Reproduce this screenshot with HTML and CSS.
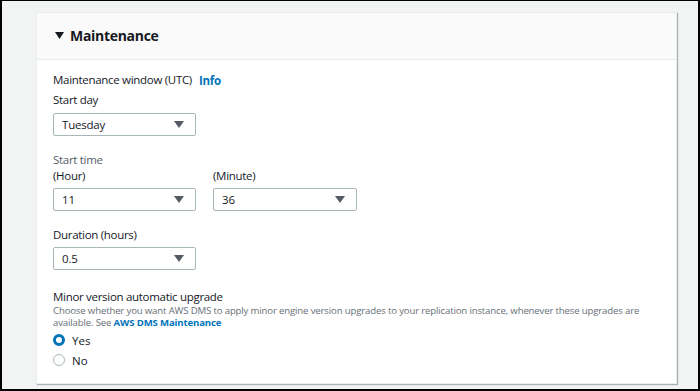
FILE: index.html
```html
<!DOCTYPE html>
<html>
<head>
<meta charset="utf-8">
<link rel="stylesheet" href="styles.css">
</head>
<body>
<div class="frame">
  <section class="card">
    <header class="card-head">
      <svg class="caret" width="9" height="7" viewBox="0 0 9 7"><path d="M0 0H9L4.5 7Z" fill="#16191f"/></svg>
      <h2>Maintenance</h2>
    </header>
    <div class="card-body">
      <div class="label-row"><span class="label">Maintenance window (UTC)</span><a class="info">Info</a></div>
      <div class="label sub">Start day</div>
      <div class="select w143"><span>Tuesday</span><svg class="arrow" width="10" height="7" viewBox="0 0 10 7"><path d="M0 0H10L5 7Z" fill="#545b64"/></svg></div>

      <div class="label muted gap-top">Start time</div>
      <div class="time-row">
        <div class="field">
          <div class="label">(Hour)</div>
          <div class="select w143 mt4"><span>11</span><svg class="arrow" width="10" height="7" viewBox="0 0 10 7"><path d="M0 0H10L5 7Z" fill="#545b64"/></svg></div>
        </div>
        <div class="field">
          <div class="label">(Minute)</div>
          <div class="select w144 mt4"><span>36</span><svg class="arrow" width="10" height="7" viewBox="0 0 10 7"><path d="M0 0H10L5 7Z" fill="#545b64"/></svg></div>
        </div>
      </div>

      <div class="label gap-top2">Duration (hours)</div>
      <div class="select w143 mt4"><span>0.5</span><svg class="arrow" width="10" height="7" viewBox="0 0 10 7"><path d="M0 0H10L5 7Z" fill="#545b64"/></svg></div>

      <div class="label strong gap-top3">Minor version automatic upgrade</div>
      <p class="desc">Choose whether you want AWS DMS to apply minor engine version upgrades to your replication instance, whenever these upgrades are available. See <a class="link">AWS DMS Maintenance</a></p>
      <div class="radio-row first"><span class="radio on"></span><span class="rlabel">Yes</span></div>
      <div class="radio-row"><span class="radio"></span><span class="rlabel">No</span></div>
    </div>
  </section>
</div>
</body>
</html>
```
FILE: styles.css
```css
* { box-sizing: border-box; }
html, body { margin: 0; padding: 0; }
body {
  width: 700px;
  height: 391px;
  background: #000;
  font-family: "Open Sans", "Noto Sans", sans-serif;
  overflow: hidden;
}
.frame {
  margin: 1px 2px 0 2px;
  height: 388px;
  background: #f2f3f3;
  padding: 11px 0 0 34px;
}
.card {
  width: 641px;
  height: 372px;
  background: #fff;
  border: 1px solid #eaeded;
  box-shadow: 1px 1px 1px 0 rgba(0, 28, 36, 0.3);
}
.card-head {
  height: 47px;
  background: #fafafa;
  border-bottom: 1px solid #eaeded;
  display: flex;
  align-items: center;
  padding: 0 0 2px 18px;
}
.caret { margin-right: 6px; margin-top: 1px; }
.card-head h2 {
  margin: 0;
  font-size: 14px;
  font-weight: 700;
  color: #16191f;
  letter-spacing: -0.3px;
}
.card-body {
  padding: 12px 0 0 16px;
}
.label {
  font-size: 11.5px;
  color: #16191f;
  line-height: 16px;
  letter-spacing: -0.3px;
}
.label-row { display: flex; align-items: center; gap: 7px; height: 16px; }
.info {
  font-size: 11.5px;
  font-weight: 700;
  color: #0073bb;
  letter-spacing: -0.3px;
}
.sub { margin-top: 4px; }
.muted { color: #545b64; }
.gap-top { margin-top: 16px; }
.gap-top2 { margin-top: 16px; }
.gap-top3 { margin-top: 19px; }
.mt4 { margin-top: 4px !important; }
.select {
  margin-top: 5px;
  height: 23px;
  border: 1px solid #aab7b8;
  border-radius: 2px;
  display: flex;
  align-items: center;
  justify-content: space-between;
  padding: 0 11px 0 8px;
  font-size: 11.5px;
  color: #16191f;
  letter-spacing: -0.2px;
  background: #fff;
}
.w143 { width: 143px; }
.w144 { width: 144px; }
.time-row { display: flex; gap: 17px; margin-top: 0; }
.desc {
  margin: 0;
  font-size: 9.6px;
  line-height: 12px;
  color: #687078;
  letter-spacing: -0.15px;
  width: 600px;
}
.link { color: #0073bb; font-weight: 700; }
.radio-row { display: flex; align-items: center; height: 20px; }
.radio-row.first { margin-top: 1px; }
.radio {
  width: 12px;
  height: 12px;
  border-radius: 50%;
  border: 1px solid #aab7b8;
  margin-left: 0;
  margin-right: 7px;
  background: #fff;
}
.radio.on { border: 3.5px solid #0073bb; }
.rlabel { font-size: 11.5px; color: #16191f; }
```
